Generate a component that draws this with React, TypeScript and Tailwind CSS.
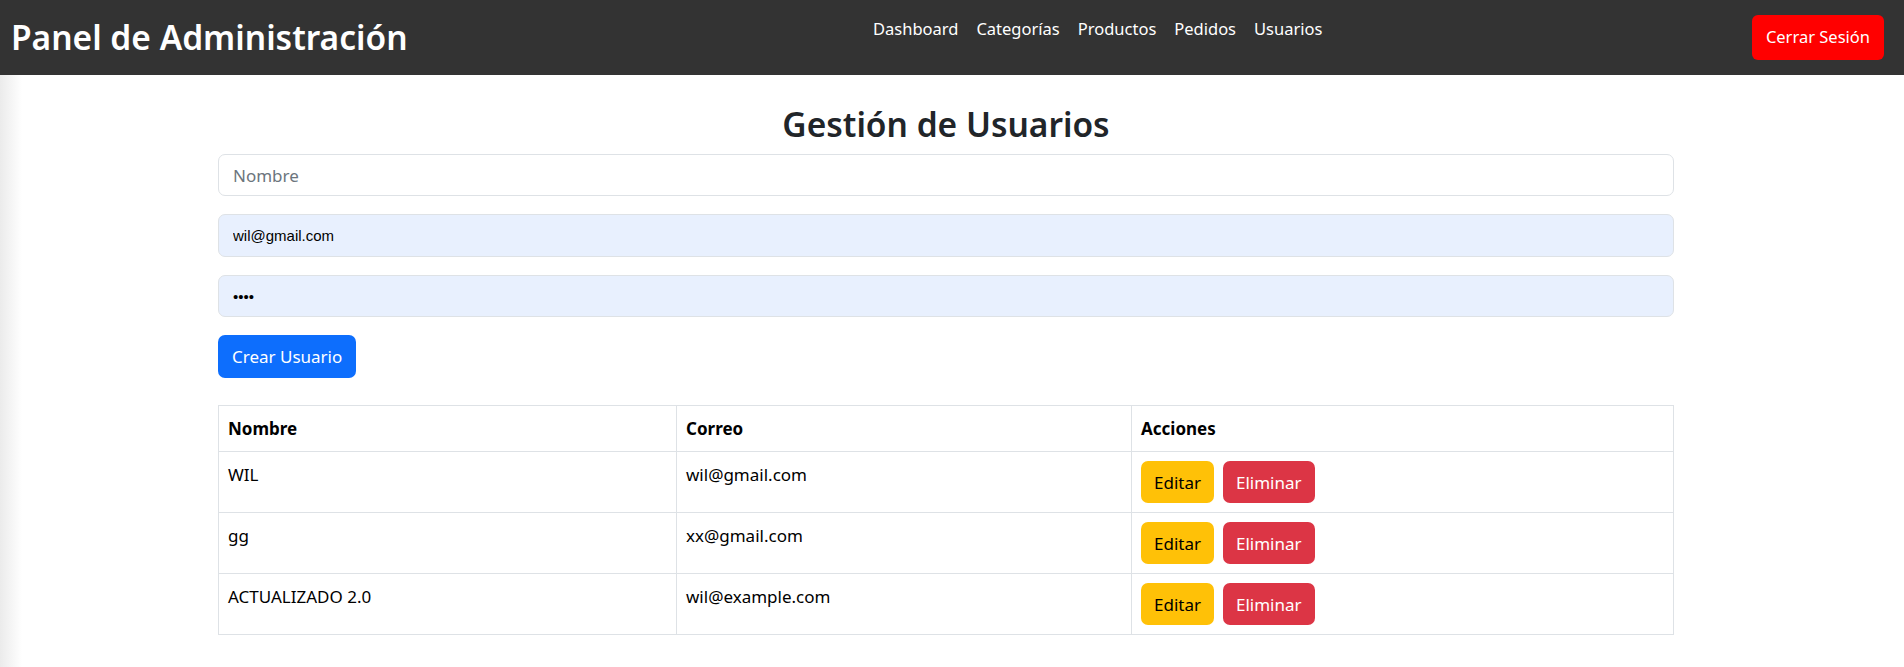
import { useState } from "react";

type Usuario = { id: number; nombre: string; correo: string };

const NAV = ["Dashboard", "Categorías", "Productos", "Pedidos", "Usuarios"];

const USUARIOS: Usuario[] = [
  { id: 1, nombre: "WIL", correo: "wil@gmail.com" },
  { id: 2, nombre: "gg", correo: "xx@gmail.com" },
  { id: 3, nombre: "ACTUALIZADO 2.0", correo: "wil@example.com" },
];

export default function App() {
  const [nombre, setNombre] = useState("");
  const [correo, setCorreo] = useState("wil@gmail.com");
  const [clave, setClave] = useState("1234");

  return (
    <div className="min-h-screen bg-[linear-gradient(to_right,#ebebeb,#ffffff_22px)] font-['Noto_Sans',sans-serif] text-[#212529]">
      <header className="flex h-[75px] items-center bg-[#333333] pl-[11px] pr-[20px]">
        <h1 className="w-[862px] shrink-0 text-[33.5px] leading-[43px] font-semibold text-white">
          Panel de Administración
        </h1>
        <nav className="self-start pt-[15px]">
          <ul className="flex gap-[18px] text-[16.5px] leading-[27px] text-white">
            {NAV.map((item) => (
              <li key={item}>
                <a href="#">{item}</a>
              </li>
            ))}
          </ul>
        </nav>
        <button
          type="button"
          className="ml-auto h-[45px] rounded-[6px] bg-[#ff0000] px-[14px] text-[16.5px] text-white"
        >
          Cerrar Sesión
        </button>
      </header>

      <main className="ml-[218px] w-[1456px]">
        <h2 className="mt-[28px] mb-[8px] text-center text-[33.5px] leading-[43px] font-semibold">
          Gestión de Usuarios
        </h2>

        <form
          className="flex flex-col gap-[18px]"
          onSubmit={(e) => {
            e.preventDefault();
          }}
        >
          <input
            value={nombre}
            onChange={(e) => setNombre(e.target.value)}
            placeholder="Nombre"
            className="h-[42px] w-full rounded-[7px] border border-[#dee2e6] bg-white px-[14px] text-[17px] outline-none placeholder:text-[#6c757d]"
          />
          <input
            value={correo}
            onChange={(e) => setCorreo(e.target.value)}
            className="h-[43px] w-full rounded-[7px] border border-[#dee2e6] bg-[#e8f0fe] px-[14px] font-['Liberation_Sans',sans-serif] text-[15px] text-black outline-none"
          />
          <input
            type="password"
            value={clave}
            onChange={(e) => setClave(e.target.value)}
            className="h-[42px] w-full rounded-[7px] border border-[#dee2e6] bg-[#e8f0fe] px-[14px] font-['Liberation_Sans',sans-serif] text-[15px] text-black outline-none"
          />
          <div>
            <button
              type="submit"
              className="h-[43px] rounded-[7px] bg-[#0d6efd] px-[14px] text-[17px] text-white"
            >
              Crear Usuario
            </button>
          </div>
        </form>

        <table className="mt-[27px] w-full border-collapse border border-[#dee2e6] text-left text-[17px] leading-[27px] text-black">
          <thead>
            <tr>
              <th className="w-[458px] border border-[#dee2e6] px-[9px] py-[9px] font-bold">Nombre</th>
              <th className="w-[455px] border border-[#dee2e6] px-[9px] py-[9px] font-bold">Correo</th>
              <th className="border border-[#dee2e6] px-[9px] py-[9px] font-bold">Acciones</th>
            </tr>
          </thead>
          <tbody>
            {USUARIOS.map((u) => (
              <tr key={u.id}>
                <td className="border border-[#dee2e6] px-[9px] py-[9px] align-top">{u.nombre}</td>
                <td className="border border-[#dee2e6] px-[9px] py-[9px] align-top">{u.correo}</td>
                <td className="border border-[#dee2e6] px-[9px] py-[9px] align-top">
                  <div className="flex gap-[9px]">
                    <button
                      type="button"
                      className="h-[42px] rounded-[7px] bg-[#ffc107] px-[13px] text-black"
                    >
                      Editar
                    </button>
                    <button
                      type="button"
                      className="h-[42px] rounded-[7px] bg-[#dc3545] px-[13px] text-white"
                    >
                      Eliminar
                    </button>
                  </div>
                </td>
              </tr>
            ))}
          </tbody>
        </table>
      </main>
    </div>
  );
}
